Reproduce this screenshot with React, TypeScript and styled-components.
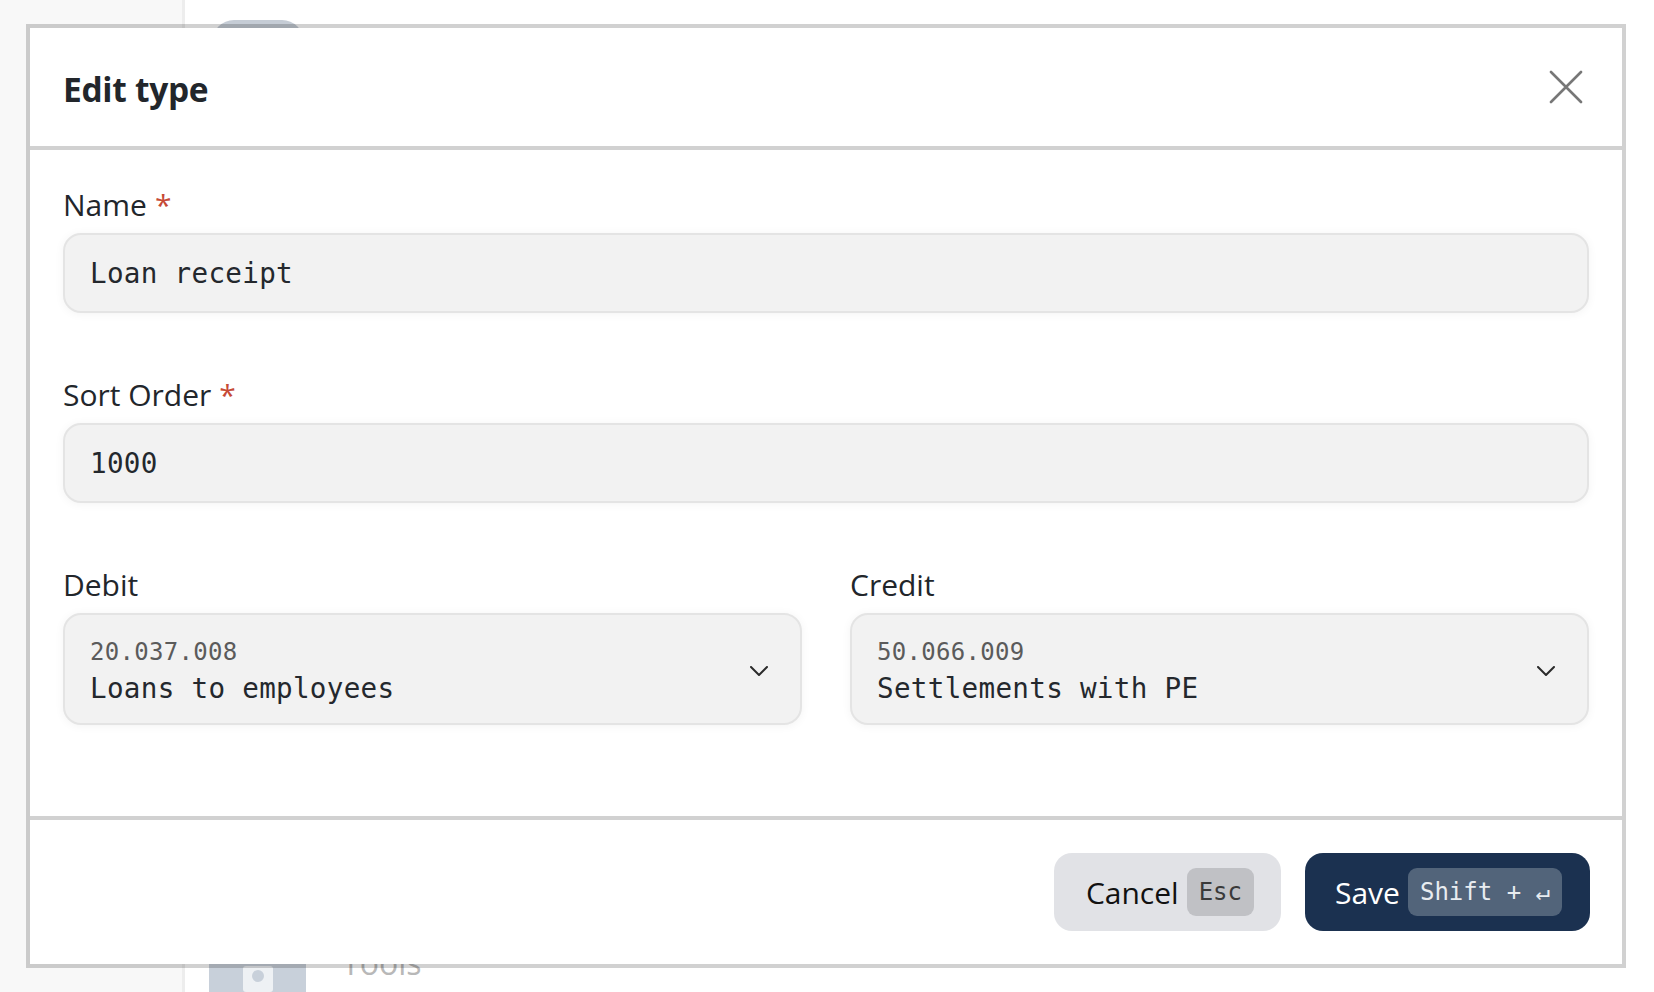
import React from "react";
import styled, { createGlobalStyle } from "styled-components";

const GlobalStyle = createGlobalStyle`
  html, body { margin: 0; padding: 0; height: 100%; }
  body {
    font-family: "Open Sans", "Noto Sans", sans-serif;
    background: #ffffff;
    overflow: hidden;
  }
  * { box-sizing: border-box; }
`;

const MONO = `"DejaVu Sans Mono", "Liberation Mono", monospace`;

/* ---------- background page ---------- */
const Page = styled.div`
  display: flex;
  height: 100vh;
`;

const Sidebar = styled.aside`
  width: 185px;
  flex: none;
  background: #f8f8f8;
  border-right: 3px solid #ededed;
`;

const Main = styled.main`
  flex: 1;
  display: flex;
  flex-direction: column;
  justify-content: space-between;
  padding: 20px 0 0 24px;
`;

const TopPill = styled.div`
  width: 92px;
  height: 44px;
  margin-left: 3px;
  border-radius: 22px;
  background: #c5ccd5;
`;

const NavItem = styled.div`
  display: flex;
  align-items: flex-start;
  gap: 36px;
  height: 40px;
`;

const NavIcon = styled.div`
  width: 97px;
  height: 40px;
  background: #c8d0da;
  display: flex;
  justify-content: center;
  padding-top: 13px;
`;

const NavLabel = styled.span`
  font-size: 32px;
  line-height: 32px;
  color: #b8b8b8;
  margin-top: -5px;
`;

/* ---------- dialog ---------- */
const Dialog = styled.div`
  position: fixed;
  left: 26px;
  top: 24px;
  width: 1600px;
  height: 944px;
  background: #ffffff;
  background-clip: padding-box;
  border: 4px solid rgba(0, 0, 0, 0.18);
  display: flex;
  flex-direction: column;
  color: #22262b;
  font-family: "Open Sans", "Noto Sans", sans-serif;
`;

const Header = styled.header`
  height: 122px;
  flex: none;
  display: flex;
  align-items: center;
  justify-content: space-between;
  padding: 0 33px;
  border-bottom: 4px solid #d1d1d1;
`;

const Title = styled.h2`
  margin: 3px 0 0;
  font-size: 33.5px;
  font-weight: 700;
  letter-spacing: -0.3px;
  color: #22262b;
`;

const CloseButton = styled.button`
  width: 46px;
  height: 46px;
  border: none;
  background: transparent;
  padding: 0;
  display: flex;
  align-items: center;
  justify-content: center;
  cursor: pointer;
`;

const Body = styled.div`
  flex: 1;
  display: flex;
  flex-direction: column;
  gap: 64px;
  padding: 37px 33px 0;
`;

const Field = styled.div`
  display: flex;
  flex-direction: column;
  gap: 10px;
  min-width: 0;
`;

const Label = styled.label`
  font-size: 30px;
  line-height: 36px;
  color: #22262b;
`;

const Required = styled.span`
  color: #c64a36;
  margin-left: 8px;
`;

const TextBox = styled.input`
  height: 80px;
  width: 100%;
  border: 2px solid #e4e4e4;
  border-radius: 18px;
  background: #f2f2f2;
  box-shadow: 0 1px 10px rgba(0, 0, 0, 0.05);
  padding: 0 24px 0 25px;
  font-family: ${MONO};
  font-size: 27.6px;
  letter-spacing: 0.3px;
  color: #24282d;
  outline: none;
`;

const Row = styled.div`
  display: grid;
  grid-template-columns: 1fr 1fr;
  gap: 48px;
`;

const Select = styled.div`
  height: 112px;
  border: 2px solid #e4e4e4;
  border-radius: 18px;
  background: #f2f2f2;
  box-shadow: 0 1px 10px rgba(0, 0, 0, 0.05);
  padding: 4px 32px 0 25px;
  display: flex;
  align-items: center;
  justify-content: space-between;
`;

const SelectText = styled.div`
  display: flex;
  flex-direction: column;
  gap: 3px;
  font-family: ${MONO};
`;

const Code = styled.span`
  font-size: 24px;
  line-height: 32px;
  letter-spacing: 0.3px;
  color: #5b5b5b;
`;

const Account = styled.span`
  font-size: 27.6px;
  line-height: 36px;
  letter-spacing: 0.3px;
  color: #24282d;
`;

const Footer = styled.footer`
  height: 148px;
  flex: none;
  border-top: 4px solid #d1d1d1;
  display: flex;
  align-items: center;
  justify-content: flex-end;
  gap: 24px;
  padding: 0 32px;
`;

const ActionButton = styled.button<{ $primary?: boolean }>`
  height: 78px;
  border: none;
  border-radius: 18px;
  padding: 0 ${(p) => (p.$primary ? "28px" : "27px")} 0 ${(p) => (p.$primary ? "30px" : "32px")};
  display: flex;
  align-items: center;
  gap: 8px;
  font-family: "Open Sans", "Noto Sans", sans-serif;
  font-size: 30px;
  background: ${(p) => (p.$primary ? "#1b3150" : "#e1e2e6")};
  color: ${(p) => (p.$primary ? "#ffffff" : "#111111")};
  cursor: pointer;
`;

const Kbd = styled.kbd<{ $primary?: boolean }>`
  height: 48px;
  padding: 0 12px;
  border-radius: 9px;
  display: flex;
  align-items: center;
  font-family: ${MONO};
  font-size: 24px;
  background: ${(p) => (p.$primary ? "#52647a" : "#c0c1c5")};
  color: ${(p) => (p.$primary ? "#e8ecf0" : "#3a3a3a")};
`;

const Chevron = () => (
  <svg width="18" height="10" viewBox="0 0 18 10" fill="none">
    <path d="M1 1 L9 9 L17 1" stroke="#2b2b2b" strokeWidth="2" strokeLinecap="round" strokeLinejoin="round" />
  </svg>
);

const CloseIcon = () => (
  <svg width="34" height="34" viewBox="0 0 34 34" fill="none">
    <path d="M2 2 L32 32 M32 2 L2 32" stroke="#777777" strokeWidth="2.6" strokeLinecap="round" />
  </svg>
);

const PersonIcon = () => (
  <svg width="32" height="27" viewBox="0 0 32 27" fill="none">
    <rect x="1" y="1" width="30" height="26" rx="3" fill="#eef1f4" />
    <circle cx="16" cy="11" r="6" fill="#c8d0da" />
  </svg>
);

type SelectProps = { code: string; name: string };
const AccountSelect = ({ code, name }: SelectProps) => (
  <Select>
    <SelectText>
      <Code>{code}</Code>
      <Account>{name}</Account>
    </SelectText>
    <Chevron />
  </Select>
);

export default function App() {
  return (
    <>
      <GlobalStyle />
      <Page>
        <Sidebar />
        <Main>
          <TopPill />
          <NavItem>
            <NavIcon>
              <PersonIcon />
            </NavIcon>
            <NavLabel>Tools</NavLabel>
          </NavItem>
        </Main>
      </Page>
      <Dialog role="dialog">
        <Header>
          <Title>Edit type</Title>
          <CloseButton aria-label="Close">
            <CloseIcon />
          </CloseButton>
        </Header>
        <Body>
          <Field>
            <Label>
              Name<Required>*</Required>
            </Label>
            <TextBox readOnly value="Loan receipt" />
          </Field>
          <Field>
            <Label>
              Sort Order<Required>*</Required>
            </Label>
            <TextBox readOnly value="1000" />
          </Field>
          <Row>
            <Field>
              <Label>Debit</Label>
              <AccountSelect code="20.037.008" name="Loans to employees" />
            </Field>
            <Field>
              <Label>Credit</Label>
              <AccountSelect code="50.066.009" name="Settlements with PE" />
            </Field>
          </Row>
        </Body>
        <Footer>
          <ActionButton>
            Cancel<Kbd>Esc</Kbd>
          </ActionButton>
          <ActionButton $primary>
            Save<Kbd $primary>Shift + ↵</Kbd>
          </ActionButton>
        </Footer>
      </Dialog>
    </>
  );
}
